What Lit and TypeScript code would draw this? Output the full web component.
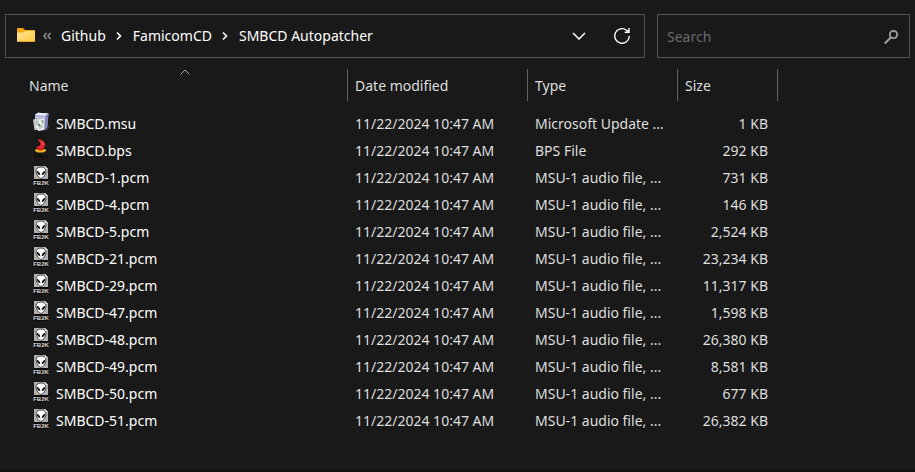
import { LitElement, html, css, svg } from "lit";
import { customElement, property } from "lit/decorators.js";

type FileKind = "msu" | "bps" | "pcm";

interface FileRow {
  name: string;
  kind: FileKind;
  type: string;
  size: string;
}

const MODIFIED = "11/22/2024 10:47 AM";
const AUDIO = "MSU-1 audio file, ...";

const FILES: FileRow[] = [
  { name: "SMBCD.msu", kind: "msu", type: "Microsoft Update ...", size: "1 KB" },
  { name: "SMBCD.bps", kind: "bps", type: "BPS File", size: "292 KB" },
  { name: "SMBCD-1.pcm", kind: "pcm", type: AUDIO, size: "731 KB" },
  { name: "SMBCD-4.pcm", kind: "pcm", type: AUDIO, size: "146 KB" },
  { name: "SMBCD-5.pcm", kind: "pcm", type: AUDIO, size: "2,524 KB" },
  { name: "SMBCD-21.pcm", kind: "pcm", type: AUDIO, size: "23,234 KB" },
  { name: "SMBCD-29.pcm", kind: "pcm", type: AUDIO, size: "11,317 KB" },
  { name: "SMBCD-47.pcm", kind: "pcm", type: AUDIO, size: "1,598 KB" },
  { name: "SMBCD-48.pcm", kind: "pcm", type: AUDIO, size: "26,380 KB" },
  { name: "SMBCD-49.pcm", kind: "pcm", type: AUDIO, size: "8,581 KB" },
  { name: "SMBCD-50.pcm", kind: "pcm", type: AUDIO, size: "677 KB" },
  { name: "SMBCD-51.pcm", kind: "pcm", type: AUDIO, size: "26,382 KB" },
];

const ICONS = {
  msu: svg`
    <path d="M15 15 19 13.500 17 18 13 19z" fill="#34363f"/>
    <path d="M4 2.500 7 .8 17.500 1.500 16 16 13 18 4 17z" fill="#a3a6cf"/>
    <path d="M4 3 7 .8 17.500 1.500 14.500 3.800z" fill="#eef0fa"/>
    <path d="M14.500 3.800 17.500 1.500 16.500 15 13.500 17.500z" fill="#7e82b4"/>
    <path d="M4 4.500 14 5v1.500L4 6z" fill="#c9cce6"/>
    <path d="M2 7.500 8 6.500 9.500 18 3.500 18z" fill="#c3ccc9"/>
    <path d="M7 7.500 13.500 6.500 13 18 7 19z" fill="#edf0f0"/>
    <circle cx="8" cy="13" r="4" fill="#b5c6bd"/>
    <path d="M8 9a4 4 0 0 1 4 3.500L8 13z" fill="#f2f6e6"/>
    <path d="M8 17a4 4 0 0 1-4-3.500L8 13z" fill="#e6ebe7"/>
    <circle cx="8" cy="13" r="1.200" fill="#6f817a"/>
    <path d="M10.500 8h2v3l-1.500 1z" fill="#8ea79a"/>`,
  bps: svg`
    <path d="M7 .5c4 0 7 2 7 5.200C14 8.500 12 10 9.500 10 7 10 5.500 9 5.200 7.500c2 .3 3.600-.2 4-1.700C9.600 4 9 2.500 7 1.800z" fill="#e9232b"/>
    <path d="M10.500 2.500c1.500.8 2 2 1.600 3.500" fill="none" stroke="#ff6a5c"/>
    <path d="M6 9.500h7v2.500H6z" fill="#d3221f"/>
    <path d="M4.500 10q2.500 0 3.500 1.500h3Q12 10 14.500 10l.5 2-3 1.500H7L4 12z" fill="#f3b51c"/>
    <text x="10" y="18.500" text-anchor="middle" font-family="Liberation Sans, sans-serif" font-size="6" font-weight="700" fill="#060606">Flips</text>`,
  pcm: svg`
    <path d="M3 0h11l3 3v10H3z" fill="#b0b0b0"/>
    <path d="M14 0v3h3z" fill="#f1f1f1"/>
    <path d="M3 13h14v7H3z" fill="#0b0b0b"/>
    <path d="M10 1c3.600 0 5.200 2 4.900 4.700-.3 2.800-2.500 6.300-4.900 6.800-2.400-.5-4.600-4-4.900-6.800C4.800 3 6.400 1 10 1z" fill="#fff" stroke="#3a3a3a" stroke-width=".9"/>
    <path d="M5.700 4.800C7.700 5.200 9.100 6.700 9.300 9.200 7.200 9 5.900 7.500 5.700 4.800zM14.300 4.800c-2 .4-3.400 1.900-3.600 4.400 2.100-.2 3.400-1.700 3.600-4.400z" fill="#111"/>
    <text x="10" y="18.500" text-anchor="middle" font-family="Liberation Sans, sans-serif" font-size="6" font-weight="700" fill="#dadada">FB2K</text>`,
};

@customElement("path-bar")
class PathBar extends LitElement {
  static styles = css`
    :host {
      display: flex;
      align-items: center;
      flex: 1;
      min-width: 0;
      box-sizing: border-box;
      height: 44px;
      padding: 0 4px 0 10px;
      border: 1px solid #535353;
    }
    .folder { width: 20px; height: 16px; flex: none; }
    .more { width: 10px; height: 8px; margin: 0 8px 0 7px; flex: none; }
    .crumbs { display: flex; align-items: center; flex: 1; min-width: 0; }
    a { color: #fff; text-decoration: none; white-space: nowrap; }
    .sep { width: 6px; height: 10px; margin: 0 11px 0 10px; flex: none; }
    button {
      display: grid;
      place-items: center;
      width: 36px;
      height: 36px;
      padding: 0;
      border: 0;
      background: none;
    }
    .refresh { margin-left: 7px; }
  `;

  render() {
    const crumbs = ["Github", "FamicomCD", "SMBCD Autopatcher"];
    return html`
      <svg class="folder" viewBox="0 0 20 16" aria-hidden="true">
        <path d="M1 1q0-1 1-1h5l2 2H18q1 0 1 1v3H1z" fill="#f5a80c"/>
        <path d="M1 4.500h6l2-1.500h10v10q0 1-1 1H2q-1 0-1-1z" fill="url(#fold)"/>
        <path d="M1 13h18q0 1-1 1H2q-1 0-1-1z" fill="#e2a226"/>
        <defs><linearGradient id="fold" x1="0" y1="0" x2="1" y2="1">
          <stop stop-color="#ffe69a"/><stop offset="1" stop-color="#ffc83a"/>
        </linearGradient></defs>
      </svg>
      <svg class="more" viewBox="0 0 10 8" fill="none" stroke="#a0a0a0" stroke-width="1.200" aria-hidden="true">
        <path d="M3.500 1 .8 4l2.700 3M7.500 1 4.800 4l2.700 3"/>
      </svg>
      <nav class="crumbs" aria-label="Path">
        ${crumbs.map((c, i) => html`${i
          ? html`<svg class="sep" viewBox="0 0 6 10" fill="none" stroke="#fff" stroke-width="1.600" aria-hidden="true"><path d="M1 1.500 4.500 5 1 8.500"/></svg>`
          : ""}<a href="#">${c}</a>`)}
      </nav>
      <button aria-label="Previous locations">
        <svg width="14" height="8" viewBox="0 0 14 8" fill="none" stroke="#fff" stroke-width="1.500"><path d="M1 1l6 6 6-6"/></svg>
      </button>
      <button class="refresh" aria-label="Refresh">
        <svg width="18" height="18" viewBox="0 0 18 18" fill="none" stroke="#fff" stroke-width="1.400"><path d="M16.300 9A7.300 7.300 0 1 1 13.500 3.200L16 5M16 1v4.300h-4.300"/></svg>
      </button>
    `;
  }
}

@customElement("search-box")
class SearchBox extends LitElement {
  static styles = css`
    :host {
      display: flex;
      align-items: center;
      box-sizing: border-box;
      flex: 0 0 253px;
      height: 44px;
      padding: 2px 10px 0 9px;
      border: 1px solid #535353;
    }
    input {
      flex: 1;
      min-width: 0;
      padding: 0;
      border: 0;
      outline: 0;
      background: none;
      color: #fff;
      font: inherit;
    }
    input::placeholder { color: #6a6a6a; opacity: 1; }
    svg { flex: none; }
  `;

  render() {
    return html`
      <input type="search" aria-label="Search" placeholder="Search">
      <svg width="16" height="16" viewBox="0 0 16 16" fill="none" stroke="#a0a0a0" aria-hidden="true">
        <circle cx="10.500" cy="5.500" r="3.700" stroke-width="1.800"/><path d="M8 8.300 1.800 14.500" stroke-width="2"/>
      </svg>
    `;
  }
}

@customElement("file-icon")
class FileIcon extends LitElement {
  static styles = css`
    :host { display: block; width: 20px; height: 20px; }
    svg { display: block; }
  `;
  @property() kind: FileKind = "pcm";

  render() {
    return html`<svg width="20" height="20" viewBox="0 0 20 20" aria-hidden="true">${ICONS[this.kind]}</svg>`;
  }
}

@customElement("app-root")
class AppRoot extends LitElement {
  static styles = css`
    :host {
      display: block;
      box-sizing: border-box;
      min-height: 100vh;
      padding-top: 14px;
      background: #191919;
      border-bottom: 2px solid #101010;
      color: #dedede;
      font: 14px/20px "Noto Sans", "Open Sans", sans-serif;
    }
    .bar { display: flex; gap: 12px; padding: 0 5px; }
    table {
      width: 100%;
      margin-top: 11px;
      border-collapse: separate;
      border-spacing: 0;
      table-layout: fixed;
    }
    .name { width: 348px; }
    .date { width: 180px; }
    .type { width: 150px; }
    .size { width: 100px; }
    th, td {
      box-sizing: border-box;
      padding: 0 10px 0 7px;
      text-align: left;
      font-weight: 400;
      white-space: nowrap;
      overflow: hidden;
    }
    th { position: relative; height: 32px; padding-top: 2px; border-right: 1px solid #636363; }
    th:first-child { padding-left: 29px; }
    th:last-child, td:last-child { border: 0; padding: 0; }
    .sort { position: absolute; top: 0; left: calc(50% + 6px); }
    .gap td { height: 9px; }
    td { height: 27px; }
    td.num { text-align: right; }
    td:first-child { padding-left: 31px; color: #fff; }
    .file { display: flex; align-items: center; gap: 5px; }
    file-icon { margin-bottom: 3px; }
  `;

  render() {
    return html`
      <div class="bar">
        <path-bar></path-bar>
        <search-box></search-box>
      </div>
      <table>
        <colgroup>
          <col class="name"><col class="date"><col class="type"><col class="size"><col>
        </colgroup>
        <thead>
          <tr>
            <th aria-sort="ascending">Name
              <svg class="sort" width="10" height="6" viewBox="0 0 10 6" fill="none" stroke="#a8a8a8" aria-hidden="true"><path d="M.5 5.500 5 1l4.500 4.500"/></svg>
            </th>
            <th>Date modified</th>
            <th>Type</th>
            <th>Size</th>
            <th></th>
          </tr>
          <tr class="gap"><td colspan="5"></td></tr>
        </thead>
        <tbody>
          ${FILES.map((f) => html`
            <tr>
              <td><div class="file"><file-icon .kind=${f.kind}></file-icon>${f.name}</div></td>
              <td>${MODIFIED}</td>
              <td>${f.type}</td>
              <td class="num">${f.size}</td>
              <td></td>
            </tr>`)}
        </tbody>
      </table>
    `;
  }
}
